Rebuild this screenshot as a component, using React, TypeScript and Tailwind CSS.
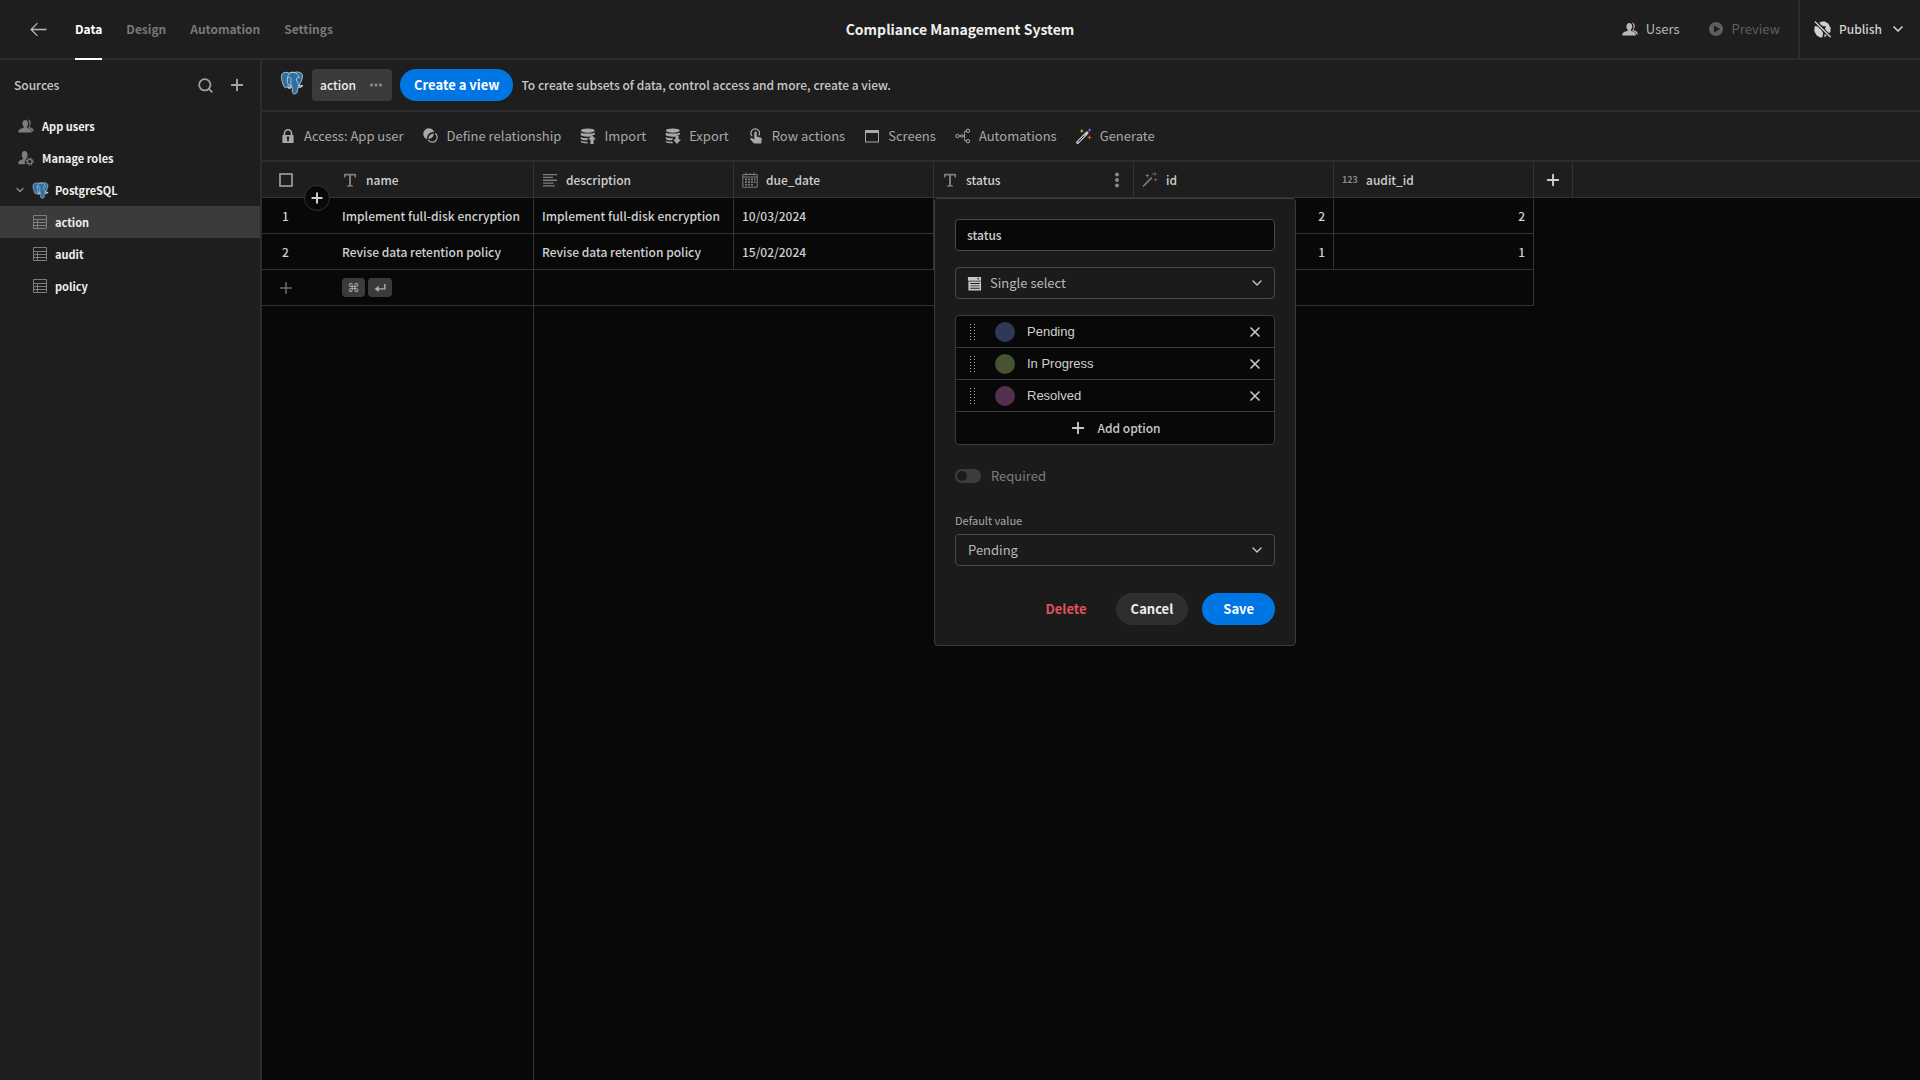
import { useState, type ReactNode } from "react";
import { ChevronDown, Plus, Search, X } from "lucide-react";

type IconProps = { className?: string };

function Svg({ className = "size-4", children }: IconProps & { children: ReactNode }) {
  return (
    <svg viewBox="0 0 16 16" fill="currentColor" className={`shrink-0 ${className}`} aria-hidden="true">
      {children}
    </svg>
  );
}

function PostgresLogo({ className }: IconProps) {
  return (
    <svg viewBox="0 0 432 446" className={`shrink-0 ${className}`} aria-hidden="true">
      <path
        fill="#2f6f9f"
        stroke="#d5e2ea"
        strokeWidth="14"
        d="M402.395,271.23c-50.302,10.376-53.76-6.655-53.76-6.655c53.111-78.808,75.313-178.843,56.153-203.326C352.514-5.534,262.036,26.049,260.522,26.869l-0.482,0.089c-9.938-2.062-21.06-3.292-33.56-3.496c-22.761-0.373-40.026,5.967-53.127,15.902c0,0-161.411-66.497-153.904,83.63c1.597,31.938,45.776,241.657,98.471,178.312c19.26-23.163,37.869-42.748,37.869-42.748c9.243,6.14,20.308,9.272,31.908,8.147l0.901-0.765c-0.28,2.876-0.152,5.689,0.361,9.019c-13.575,15.167-9.586,17.83-36.723,23.416c-27.459,5.659-11.328,15.734-0.796,18.367c12.768,3.193,42.305,7.716,62.268-20.224l-0.796,3.188c5.319,4.26,9.054,27.711,8.428,48.969c-0.626,21.259-1.044,35.854,3.147,47.254c4.191,11.4,8.368,37.05,44.042,29.406c29.809-6.388,45.256-22.942,47.405-50.555c1.525-19.631,4.976-16.729,5.194-34.28l2.768-8.309c3.192-26.611,0.507-35.196,18.872-31.203l4.463,0.392c13.517,0.615,31.208-2.174,41.591-7c22.358-10.376,35.618-27.7,13.573-23.148z"
      />
      <g fill="none" stroke="#d5e2ea" strokeWidth="13" strokeLinecap="round" strokeLinejoin="round">
        <path d="M348.282,263.953c0,0,3.461,17.036,53.764,6.653c22.04-4.552,8.776,12.774-13.577,23.155c-18.345,8.514-59.474,10.696-60.146-1.069c-1.729-30.355,21.647-21.133,19.96-28.739c-1.525-6.85-11.979-13.573-18.894-30.338c-6.037-14.633-82.796-126.849,21.287-110.183c3.813-0.789-27.146-99.002-124.553-100.599c-97.385-1.597-94.19,119.762-94.19,119.762" />
        <path d="M188.604,274.334c-13.577,15.166-9.584,17.829-36.723,23.417c-27.459,5.66-11.326,15.733-0.797,18.365c12.768,3.195,42.307,7.718,62.266-20.229c6.078-8.509-0.036-22.086-8.385-25.547c-4.034-1.671-9.428-3.765-16.361,3.994z" />
        <path d="M154,259c-28-20-24-60-22-96c1-18-2-24-2-30c20-14 62-20 68 8c6 40-14 70 0 112" />
      </g>
    </svg>
  );
}

function BackIcon({ className }: IconProps) {
  return (
    <Svg className={className}>
      <path fill="none" stroke="currentColor" strokeWidth="1.200" d="M15.500 8H1M7 2 1 8l6 6" />
    </Svg>
  );
}

function UsersIcon({ className }: IconProps) {
  return (
    <Svg className={className}>
      <path d="M9.300 9.900c-.500-.200-.500-.800-.400-1.200.800-.800 1.300-2 1.300-3.200 0-2.200-1.100-3.600-2.900-3.600S4.400 3.300 4.400 5.500c0 1.200.500 2.400 1.300 3.200.100.400.100 1-.400 1.200C2.700 10.500.300 11.200.300 13.800c0 .400.200.700.600.700h12.400c.400 0 .600-.300.600-.700 0-2.600-2-3.300-4.600-3.900z" />
      <path d="M9.800 1.400c1.900 0 3 1.400 3 3.500 0 1.300-.500 2.400-1.300 3.200-.100.500-.100 1 .500 1.200 1.700.600 3.900 1.600 3.900 4.200l-1.200.100c-.500-2.300-2.200-3.100-4-3.700-.400-.200-.400-.700-.200-1 .700-1 1.100-2.200 1.100-3.500 0-1.800-.700-3.100-1.800-4z" />
    </Svg>
  );
}

function UserGearIcon({ className }: IconProps) {
  return (
    <Svg className={className}>
      <path d="M8.200 9.200c0-.400 0-.700.200-1C9.200 7.400 9.600 6.300 9.600 5 9.600 2.500 8.400.900 6.600.900S3.700 2.500 3.700 5c0 1.200.400 2.300 1.100 3.100.200.500.200 1.300-.500 1.500C2 10.200.200 11 .200 13.600c0 .400.200.700.600.700h6.400c-.800-2-.500-3.800 1-5.100z" />
      <circle cx="11.800" cy="11.600" r="2.300" fill="none" stroke="currentColor" strokeWidth="1.300" />
      <circle cx="11.800" cy="11.600" r="3.500" fill="none" stroke="currentColor" strokeWidth="1.300" strokeDasharray="1.300 1.449" />
    </Svg>
  );
}

function PlayIcon({ className }: IconProps) {
  return (
    <Svg className={className}>
      <path fillRule="evenodd" d="M8 1a7 7 0 1 0 0 14A7 7 0 0 0 8 1zM6 4.600l6 3.400-6 3.400z" />
    </Svg>
  );
}

function GlobeStrikeIcon({ className }: IconProps) {
  return (
    <Svg className={className}>
      <path d="M5 1.200 9.500.3 13.400 2.300 15.700 6.500 15.400 10.800 13.600 11 10.300 7.600 11.200 4.900 8.800 5 6.600 3.800zM.900 4.600 3.400 5.200 7.200 9 8.500 11.300 8 14.800 6.500 15.700 2.600 13.600.400 9.800.300 7zM10.300 12l1.800 1.900-2.600 1.500z" />
      <path d="M.8.500 15.700 15.200" stroke="currentColor" strokeWidth="1.300" />
    </Svg>
  );
}

function TableIcon({ className }: IconProps) {
  return (
    <Svg className={className}>
      <path
        fill="none"
        stroke="currentColor"
        d="M1.500 1.500h13v13h-13zM1.500 5.500h13M1.500 8.500h13M1.500 11.500h13M5.500 5.500v9"
      />
    </Svg>
  );
}

function LockIcon({ className }: IconProps) {
  return (
    <Svg className={className}>
      <path
        fillRule="evenodd"
        d="M13 7h-.700V5.300a4.300 4.300 0 0 0-8.600 0V7H3a.600.600 0 0 0-.600.600v6.800c0 .300.300.600.600.600h10c.300 0 .600-.300.600-.600V7.600A.600.600 0 0 0 13 7zM5.300 5.300a2.700 2.700 0 0 1 5.400 0V7H5.300zM8.800 11v1.700a.800.800 0 0 1-1.600 0V11a1.400 1.400 0 1 1 1.600 0z"
      />
    </Svg>
  );
}

function RelationIcon({ className }: IconProps) {
  return (
    <Svg className={className}>
      <path d="M11.200 4.100A5.600 5.600 0 1 0 4.100 11.200 6.200 6.200 0 0 1 11.200 4.100z" />
      <path d="M5.400 10.900a5.700 5.700 0 0 0 5.500-5.500 5.600 5.600 0 0 0-5.500 5.500z" />
      <path fill="none" stroke="currentColor" strokeWidth="1.200" d="M12.200 5.200a5 5 0 1 1-7 7" />
    </Svg>
  );
}

function DataIcon({ className, direction }: IconProps & { direction: "up" | "down" }) {
  return (
    <Svg className={className}>
      <ellipse cx="7.800" cy="2.600" rx="7" ry="2.100" />
      <path d="M.800 4.400c2 1.600 12 1.600 14 0v2.300c-2 .200-3.500.900-5 2C6 9 1.800 8.400.800 7.300z" />
      <path d="M.800 9c1.600 1.100 4.500 1.300 7.200 1.100L7 12.200C4.500 12.300 1.800 12 .800 11zM.800 12.700c1.500.900 4 1.200 6.500 1.100l.700 1.500c-3 .200-6.200-.200-7.200-1.300z" />
      {direction === "up" ? (
        <path d="M12 7.200 16 11.600h-2.400V16h-3.200v-4.400H8z" />
      ) : (
        <path d="M12 16 16 11.600h-2.400V7.600h-3.200v4H8z" />
      )}
    </Svg>
  );
}

function TouchIcon({ className }: IconProps) {
  return (
    <Svg className={className}>
      <path
        fill="none"
        stroke="currentColor"
        strokeWidth="1.200"
        d="M4.300 8.200A4.200 4.200 0 1 1 10.800 7.400"
      />
      <path d="M6.300 4.600a1.200 1.200 0 0 1 2.400 0v4l3.700.9c1 .3 1.500 1 1.400 2l-.6 4H6L2.300 11.300c-.5-.8.5-1.700 1.400-1.200l2.600 1.500z" />
    </Svg>
  );
}

function ScreenIcon({ className }: IconProps) {
  return (
    <Svg className={className}>
      <path fillRule="evenodd" d="M1 2h14v12.500H1zM2 5v8.500h12V5z" />
    </Svg>
  );
}

function AutomationIcon({ className }: IconProps) {
  return (
    <Svg className={className}>
      <g fill="none" stroke="currentColor" strokeWidth="1">
        <circle cx="2.400" cy="8" r="1.700" />
        <circle cx="6.800" cy="8" r="1.300" />
        <circle cx="13" cy="2.800" r="1.700" />
        <circle cx="13" cy="13.200" r="1.700" />
        <path d="M4.100 8h1.400M8.100 8h1.600M11.300 2.800c-2.300 0-1.700 1.500-1.700 5.200s-.600 5.200 1.700 5.200" />
      </g>
    </Svg>
  );
}

function GenerateIcon({ className }: IconProps) {
  return (
    <Svg className={className}>
      <path d="M1.600 14.500 11 4.900" stroke="#c4c4c4" strokeWidth="3" strokeLinecap="round" />
      <path d="M2.200 13.900 8.300 7.600" stroke="#1e1e1e" strokeWidth="1" />
      <path fill="#e0c34c" d="m5.800.8.600 1.600 1.600.6-1.600.6-.6 1.600-.6-1.600L3.600 3l1.600-.6z" />
      <path fill="#7677dd" d="m13.600 0 .6 1.500 1.500.6-1.500.6-.6 1.500-.6-1.500-1.500-.6 1.500-.6z" />
      <path fill="#e0574d" d="m13.400 7 .7 1.700 1.700.7-1.700.7-.7 1.700-.7-1.700-1.700-.7 1.700-.7z" />
    </Svg>
  );
}

function TextIcon({ className }: IconProps) {
  return (
    <Svg className={className}>
      <path d="M2 1.800h12v3.700h-1.300L12.300 3.500H9v9.600l1.800.4v1.200H5.200v-1.200L7 13.100V3.500H3.700l-.4 2H2z" />
    </Svg>
  );
}

function LongTextIcon({ className }: IconProps) {
  return (
    <Svg className={className}>
      <path d="M1 2h14v1.300H1zM1 4.800h10v1.300H1zM1 7.600h14v1.300H1zM1 10.400h10.500v1.300H1zM1 13.200h12v1.300H1z" />
    </Svg>
  );
}

function CalendarIcon({ className }: IconProps) {
  return (
    <Svg className={className}>
      <path fill="none" stroke="currentColor" d="M.800 2.500h14.400v12.700H.800zM.800 5h14.400M4 .500v3M12 .500v3M8 1v2" />
      <path d="M3 6.500h2v1.700H3zM6 6.500h2v1.700H6zM9 6.500h2v1.700H9zM12 6.500h1.500v1.700H12zM3 9.200h2v1.700H3zM6 9.200h2v1.700H6zM9 9.200h2v1.700H9zM12 9.200h1.500v1.700H12zM3 12h2v1.500H3zM6 12h2v1.500H6zM9 12h2v1.500H9z" />
    </Svg>
  );
}

function WandIcon({ className }: IconProps) {
  return (
    <Svg className={className}>
      <path d="M1 14.500 9.800 5.700" stroke="currentColor" strokeWidth="1.700" />
      <path d="m5.300 1.500.6 1.500 1.500.6-1.500.6-.6 1.500-.6-1.500-1.500-.6L4.700 3zM13 0l.5 1.500 1.500.5-1.500.5L13 4l-.5-1.500L11 2l1.500-.5zM13.500 6l.5 1.200 1.300.5-1.300.5-.5 1.300-.5-1.300-1.300-.5 1.300-.5zM10 1.500h1v1h-1z" />
    </Svg>
  );
}

function NumberIcon() {
  return <span className="w-4 text-[9px] leading-4 font-bold text-[#8a8a8a]">123</span>;
}

function DropdownIcon({ className }: IconProps) {
  return (
    <Svg className={className}>
      <path fillRule="evenodd" d="M1 1h14v4H1zM10.500 2.300l1.500 1.600 1.500-1.600zM2 5.800h13V15.500H1.500V5.800zM3.500 7.500v1h10v-1zM3.500 10v1h10v-1zM3.500 12.600v1h10v-1z" />
    </Svg>
  );
}

function DotsIcon({ className }: IconProps) {
  return (
    <Svg className={className}>
      <circle cx="8" cy="2.500" r="2" />
      <circle cx="8" cy="8" r="2" />
      <circle cx="8" cy="13.500" r="2" />
    </Svg>
  );
}

function GripIcon({ className }: IconProps) {
  return (
    <Svg className={className}>
      <path
        fill="none"
        stroke="currentColor"
        strokeWidth="1"
        strokeDasharray="1 2"
        d="M5.500 0v16M9.500 0v16"
      />
    </Svg>
  );
}

const tabs = ["Data", "Design", "Automation", "Settings"];
const tables = ["action", "audit", "policy"];

const tools = [
  { label: "Access: App user", icon: <LockIcon /> },
  { label: "Define relationship", icon: <RelationIcon /> },
  { label: "Import", icon: <DataIcon direction="up" /> },
  { label: "Export", icon: <DataIcon direction="down" /> },
  { label: "Row actions", icon: <TouchIcon /> },
  { label: "Screens", icon: <ScreenIcon /> },
  { label: "Automations", icon: <AutomationIcon /> },
  { label: "Generate", icon: <GenerateIcon /> },
];

const rows = [
  { name: "Implement full-disk encryption", dueDate: "10/03/2024", status: "Pending", id: 2, auditId: 2 },
  { name: "Revise data retention policy", dueDate: "15/02/2024", status: "Pending", id: 1, auditId: 1 },
];

function TopBar() {
  return (
    <header className="grid h-[60px] grid-cols-[1fr_auto_1fr] border-b-2 border-[#2c2c2c]">
      <div className="flex items-center gap-7 pl-[30px]">
        <button aria-label="Back" className="text-[#b8b8b8]">
          <BackIcon className="size-[17px]" />
        </button>
        <nav className="-mb-0.5 flex gap-6 self-stretch text-xs font-bold">
          {tabs.map((tab) => (
            <a
              key={tab}
              href="#"
              className={
                tab === "Data"
                  ? "flex items-center border-b-2 border-white text-white"
                  : "flex items-center border-b-2 border-transparent text-[#787878]"
              }
            >
              {tab}
            </a>
          ))}
        </nav>
      </div>
      <h1 className="self-center text-sm font-bold text-[#efefef]">Compliance Management System</h1>
      <div className="flex items-center justify-end">
        <button className="mr-7 flex items-center gap-2 text-[#b8b8b8]">
          <UsersIcon /> Users
        </button>
        <button className="mr-[18px] flex items-center gap-2 text-[#5e5e5e]">
          <PlayIcon /> Preview
        </button>
        <button className="flex items-center gap-2 self-stretch border-l-2 border-[#2c2c2c] pr-3.5 pl-3.5 text-xs font-medium text-[#d0d0d0]">
          <GlobeStrikeIcon className="size-[17px]" /> Publish
          <ChevronDown className="size-4" strokeWidth={2.5} />
        </button>
      </div>
    </header>
  );
}

function Sidebar() {
  return (
    <aside className="w-[262px] shrink-0 border-r-2 border-[#2c2c2c]">
      <div className="flex h-[50px] items-center pr-3.5 pl-3.5 text-xs font-medium text-[#c8c8c8]">
        <h2 className="flex-1">Sources</h2>
        <button aria-label="Search" className="mr-3.5 text-[#a0a0a0]">
          <Search className="size-[17px]" strokeWidth={2.5} />
        </button>
        <button aria-label="Add source" className="text-[#a8a8a8]">
          <Plus className="size-[18px]" strokeWidth={2.5} />
        </button>
      </div>
      <ul className="text-[11px] font-bold text-[#efefef]">
        <li>
          <a href="#" className="flex h-8 items-center gap-2 pl-[18px]">
            <UsersIcon className="size-4 text-[#7d7d7d]" /> App users
          </a>
        </li>
        <li>
          <a href="#" className="flex h-8 items-center gap-2 pl-[18px]">
            <UserGearIcon className="size-4 text-[#7d7d7d]" /> Manage roles
          </a>
        </li>
        <li>
          <a href="#" className="flex h-8 items-center pl-3.5">
            <ChevronDown className="mr-1.5 size-3 text-[#909090]" strokeWidth={2.5} />
            <PostgresLogo className="mr-1.5 size-[17px]" /> PostgreSQL
          </a>
          <ul>
            {tables.map((table) => (
              <li key={table}>
                <a
                  href="#"
                  className={
                    table === "action"
                      ? "flex h-8 items-center gap-[7px] bg-[#3b3b3b] pl-8"
                      : "flex h-8 items-center gap-[7px] pl-8"
                  }
                >
                  <TableIcon className="size-4 text-[#7d7d7d]" /> {table}
                </a>
              </li>
            ))}
          </ul>
        </li>
      </ul>
    </aside>
  );
}

function ColumnEditor() {
  const [name, setName] = useState("status");
  const [options, setOptions] = useState([
    { label: "Pending", color: "bg-[#2e3a55]" },
    { label: "In Progress", color: "bg-[#465433]" },
    { label: "Resolved", color: "bg-[#53304f]" },
  ]);

  return (
    <form className="absolute top-full left-0 z-20 mt-px w-[362px] rounded border border-[#3c3c3c] bg-[#1b1b1b] p-5 text-left text-[13px] font-normal text-[#c8c8c8]">
      <input
        aria-label="Column name"
        value={name}
        onChange={(e) => setName(e.target.value)}
        className="block h-8 w-full rounded border border-[#4a4a4a] bg-[#080808] px-[11px] pb-0.5 text-xs font-medium text-[#d0d0d0]"
      />

      <div className="mt-4 flex h-8 items-center gap-2 rounded border border-[#4a4a4a] pr-[9px] pl-[11px]">
        <DropdownIcon className="size-[15px]" />
        <select aria-label="Column type" className="flex-1 appearance-none bg-transparent text-[#b8b8b8]">
          <option>Single select</option>
        </select>
        <ChevronDown className="size-4" strokeWidth={2} />
      </div>

      <div className="mt-4 rounded border border-[#3c3c3c] bg-[#080808]">
        {options.map((option, i) => (
          <div key={option.label} className="flex h-8 items-center border-b border-[#3c3c3c] pr-[11px]">
            <GripIcon className="mr-3.5 ml-[9px] size-4 text-[#b0b0b0]" />
            <span className={`size-5 rounded-full ${option.color}`} />
            <input
              aria-label={`Option ${i + 1}`}
              defaultValue={option.label}
              className="ml-3 min-w-0 flex-1 bg-transparent font-['Liberation_Sans',sans-serif] text-[#d0d0d0]"
            />
            <button
              type="button"
              aria-label={`Remove ${option.label}`}
              onClick={() => setOptions(options.filter((o) => o !== option))}
            >
              <X className="size-4" strokeWidth={2.5} />
            </button>
          </div>
        ))}
        <button type="button" className="flex h-8 w-full items-center justify-center gap-2.5 text-xs font-medium">
          <Plus className="size-[18px]" strokeWidth={2.5} /> Add option
        </button>
      </div>

      <label className="mt-[19px] flex h-6 items-center gap-2.5 text-[#7d7d7d]">
        <input
          type="checkbox"
          role="switch"
          className="h-3.5 w-[26px] appearance-none rounded-full bg-[#3c3c3c] before:block before:size-3.5 before:rounded-full before:border-2 before:border-[#3c3c3c] before:bg-[#1b1b1b]"
        />
        Required
      </label>

      <label htmlFor="default-value" className="mt-6 block text-[11px] leading-4 text-[#a8a8a8]">
        Default value
      </label>
      <div className="mt-1.5 flex h-8 items-center rounded border border-[#4a4a4a] pr-[9px] pl-3">
        <select id="default-value" className="flex-1 appearance-none bg-transparent text-[#b8b8b8]">
          <option>Pending</option>
        </select>
        <ChevronDown className="size-4" strokeWidth={2} />
      </div>

      <div className="mt-[27px] flex h-8 items-center justify-end font-bold">
        <button type="button" className="mr-[29px] text-[#e35162]">
          Delete
        </button>
        <button type="button" className="mr-3.5 h-8 rounded-full bg-[#2e2e2e] px-[15px] text-[#efefef]">
          Cancel
        </button>
        <button type="button" className="h-8 rounded-full bg-[#0076e4] px-[21px] text-white">
          Save
        </button>
      </div>
    </form>
  );
}

function HeaderCell({
  icon,
  label,
  children,
}: {
  icon: ReactNode;
  label: string;
  children?: ReactNode;
}) {
  return (
    <th scope="col" className="relative h-9 border-r border-b border-[#333333] px-2 text-left font-medium">
      <div className="flex items-center gap-2">
        <span className="flex text-[#7d7d7d]">{icon}</span>
        <span className="flex-1">{label}</span>
      </div>
      {children}
    </th>
  );
}

const cell = "h-9 border-r border-b border-[#333333] px-2 whitespace-nowrap";

function DataGrid() {
  return (
    <div className="flex flex-1 flex-col bg-[#080808]">
      <table className="w-full table-fixed border-separate border-spacing-0 text-xs font-medium text-[#d0d0d0]">
        <colgroup>
          <col className="w-[72px]" />
          <col className="w-[200px]" />
          <col className="w-[200px]" />
          <col className="w-[200px]" />
          <col className="w-[200px]" />
          <col className="w-[200px]" />
          <col className="w-[200px]" />
          <col className="w-[39px]" />
          <col />
        </colgroup>
        <thead className="bg-[#1e1e1e]">
          <tr>
            <th className="relative h-9 border-b border-[#333333] pl-[17px]">
              <input
                type="checkbox"
                aria-label="Select all rows"
                className="block size-3.5 appearance-none rounded-[1px] border-2 border-[#8a8a8a]"
              />
              <button
                aria-label="Insert row"
                className="absolute right-1 -bottom-3.5 z-10 flex size-[26px] items-center justify-center rounded-full border border-[#333333] bg-[#080808]"
              >
                <Plus className="size-4" strokeWidth={3} />
              </button>
            </th>
            <HeaderCell icon={<TextIcon />} label="name" />
            <HeaderCell icon={<LongTextIcon />} label="description" />
            <HeaderCell icon={<CalendarIcon />} label="due_date" />
            <HeaderCell icon={<TextIcon />} label="status">
              <button aria-label="Column menu" className="absolute top-2.5 right-2 text-[#8a8a8a]">
                <DotsIcon className="size-4" />
              </button>
              <ColumnEditor />
            </HeaderCell>
            <HeaderCell icon={<WandIcon />} label="id" />
            <HeaderCell icon={<NumberIcon />} label="audit_id" />
            <th className="border-r border-b border-[#333333]">
              <button aria-label="Add column" className="mx-auto block">
                <Plus className="size-[18px]" strokeWidth={2.5} />
              </button>
            </th>
            <th className="border-b border-[#333333]" />
          </tr>
        </thead>
        <tbody>
          {rows.map((row, i) => (
            <tr key={row.id}>
              <td className="h-9 border-b border-[#333333] pl-5">{i + 1}</td>
              <td className={cell}>{row.name}</td>
              <td className={cell}>{row.name}</td>
              <td className={cell}>{row.dueDate}</td>
              <td className={cell}>{row.status}</td>
              <td className={`${cell} text-right`}>{row.id}</td>
              <td className={`${cell} text-right`}>{row.auditId}</td>
            </tr>
          ))}
          <tr>
            <td className="h-9 border-b border-[#333333] pl-[15px]">
              <button aria-label="Add row" className="block text-[#6e6e6e]">
                <Plus className="size-[18px]" strokeWidth={2} />
              </button>
            </td>
            <td className={cell}>
              <div className="flex gap-[3px] text-xs leading-none text-[#b0b0b0]">
                <kbd className="flex h-[19px] w-[23px] items-center justify-center rounded bg-[#3b3b3b] font-['DejaVu_Sans',sans-serif]">
                  ⌘
                </kbd>
                <kbd className="flex h-[19px] w-6 items-center justify-center rounded bg-[#3b3b3b]">
                  <Svg className="size-3.5">
                    <path fill="none" stroke="currentColor" strokeWidth="1.600" d="M13.500 3.500V9H4" />
                    <path d="M6.500 5.500v7L2 9z" />
                  </Svg>
                </kbd>
              </div>
            </td>
            <td colSpan={5} className={cell} />
          </tr>
        </tbody>
      </table>
      <div className="w-[272px] flex-1 border-r border-[#333333]" />
    </div>
  );
}

export default function App() {
  return (
    <div className="flex min-h-screen flex-col bg-[#1e1e1e] font-['Noto_Sans_CJK_SC',sans-serif] text-[13px] leading-5">
      <TopBar />
      <div className="flex flex-1">
        <Sidebar />
        <main className="flex min-w-0 flex-1 flex-col">
          <div className="flex h-[52px] items-center border-b-2 border-[#2c2c2c] pl-[18px] text-xs font-medium text-[#c8c8c8]">
            <PostgresLogo className="mr-2 mb-1 size-6" />
            <button className="mr-2 flex h-8 items-center gap-3 rounded bg-[#3b3b3b] px-2 text-[#efefef]">
              action
              <Svg className="size-4 text-[#8a8a8a]">
                <circle cx="3.500" cy="8" r="1.600" />
                <circle cx="8" cy="8" r="1.600" />
                <circle cx="12.500" cy="8" r="1.600" />
              </Svg>
            </button>
            <button className="mr-2 h-8 rounded-full bg-[#0076e4] px-3.5 text-[13px] font-bold text-white">
              Create a view
            </button>
            <p>To create subsets of data, control access and more, create a view.</p>
          </div>
          <div className="flex h-[50px] items-center gap-[19px] border-b-2 border-[#2c2c2c] pl-[18px] text-[#a8a8a8]">
            {tools.map((tool) => (
              <button key={tool.label} className="flex items-center gap-2">
                {tool.icon}
                {tool.label}
              </button>
            ))}
          </div>
          <DataGrid />
        </main>
      </div>
    </div>
  );
}
